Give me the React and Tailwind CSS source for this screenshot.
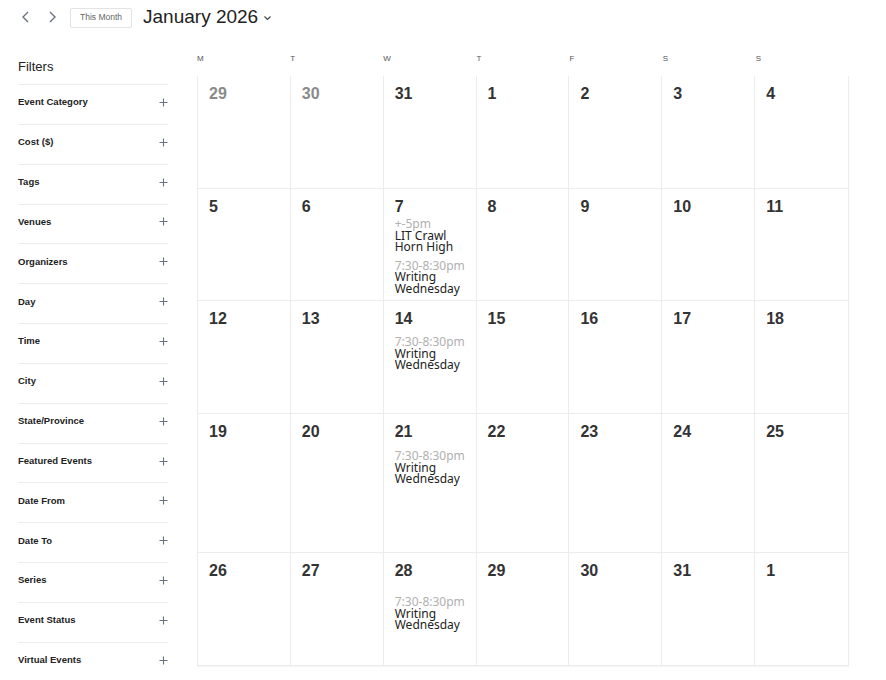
const FILTERS = [
  "Event Category",
  "Cost ($)",
  "Tags",
  "Venues",
  "Organizers",
  "Day",
  "Time",
  "City",
  "State/Province",
  "Featured Events",
  "Date From",
  "Date To",
  "Series",
  "Event Status",
  "Virtual Events",
];

const DAYS = ["M", "T", "W", "T", "F", "S", "S"];

const WRITING = { time: "7:30-8:30pm", title: ["Writing", "Wednesday"] };

// each week: height + offset of the event list
const WEEKS = [
  { h: "h-[113px]", pad: "pt-0", days: [[29, true], [30, true], [31], [1], [2], [3], [4]] },
  {
    h: "h-[112px]",
    pad: "pt-[0px]",
    days: [[5], [6], [7, false, [{ time: "+-5pm", title: ["LIT Crawl", "Horn High"] }, WRITING]], [8], [9], [10], [11]],
  },
  { h: "h-[113px]", pad: "pt-[6px]", days: [[12], [13], [14, false, [WRITING]], [15], [16], [17], [18]] },
  { h: "h-[139px]", pad: "pt-[7px]", days: [[19], [20], [21, false, [WRITING]], [22], [23], [24], [25]] },
  { h: "h-[112px]", pad: "pt-[14px]", days: [[26], [27], [28, false, [WRITING]], [29], [30], [31], [1]] },
];

function Chevron({ dir }) {
  return (
    <svg width="10" height="14" viewBox="0 0 10 14" className="text-gray-500">
      <path
        d={dir === "left" ? "M7 2 L2 7 L7 12" : "M3 2 L8 7 L3 12"}
        fill="none"
        stroke="currentColor"
        strokeWidth="1.4"
      />
    </svg>
  );
}

function Plus() {
  return (
    <svg width="9" height="9" viewBox="0 0 9 9" className="text-gray-500">
      <path d="M4.5 0.5 V8.5 M0.5 4.5 H8.5" stroke="currentColor" strokeWidth="1.1" />
    </svg>
  );
}

function DayCell({ day, dim, events, pad, first, last }) {
  return (
    <div className={`${last ? "" : "border-r"} border-[#ececec] ${first ? "pl-[11px]" : "pl-[11px]"} pt-[9px]`}>
      <div
        className={`text-[16px] font-bold leading-[18px] ${dim ? "text-[#8a8a8a]" : "text-[#333]"}`}
        style={{ fontFamily: '"Liberation Sans", Arial, sans-serif' }}
      >
        {day}
      </div>
      {events && (
        <div className={`${pad} flex flex-col gap-[5px]`} style={{ fontFamily: '"Noto Sans", sans-serif' }}>
          {events.map((ev, i) => (
            <div key={i} className="text-[12px] leading-[11.5px]">
              <div className="text-[#b0b0b0] mt-[2px]">{ev.time}</div>
              {ev.title.map((t) => (
                <div key={t} className="text-[#222]">{t}</div>
              ))}
            </div>
          ))}
        </div>
      )}
    </div>
  );
}

export default function App() {
  return (
    <div
      className="w-[886px] h-[680px] bg-white overflow-hidden relative"
      style={{ fontFamily: '"Liberation Sans", Arial, sans-serif' }}
    >
      {/* Top bar */}
      <div className="flex items-center h-[36px] pl-[21px]">
        <div className="flex items-center gap-[16px] mt-[-2px]">
          <Chevron dir="left" />
          <Chevron dir="right" />
        </div>
        <button className="ml-[13px] h-[20px] px-[9px] border border-[#e3e3e3] rounded-[2px] text-[8.5px] text-[#666] mt-[-1px]">
          This Month
        </button>
        <div className="ml-[11px] flex items-center text-[19px] text-[#222] mt-[-2px]">
          January 2026
          <svg width="9" height="6" viewBox="0 0 9 6" className="ml-[5px] mt-[2px] text-[#444]">
            <path d="M1.5 1.5 L4.5 4.5 L7.5 1.5" fill="none" stroke="currentColor" strokeWidth="1.2" />
          </svg>
        </div>
      </div>

      <div className="flex">
        {/* Filters sidebar */}
        <div className="w-[150px] ml-[18px] pt-[23px]">
          <div className="text-[13px] text-[#222] leading-[16px] mb-[9px]">Filters</div>
          {FILTERS.map((f) => (
            <div
              key={f}
              className="h-[39.85px] border-t border-[#ececec] flex items-center justify-between pb-[4px]"
            >
              <span className="text-[9.5px] font-bold text-[#222]">{f}</span>
              <Plus />
            </div>
          ))}
        </div>

        {/* Calendar */}
        <div className="ml-[29px] w-[652px] pt-[18px]">
          <div className="grid grid-cols-7 h-[22px]">
            {DAYS.map((d, i) => (
              <div key={i} className="text-[8px] text-[#555] leading-[10px]">
                {d}
              </div>
            ))}
          </div>
          <div className="border-l border-b border-r border-[#ececec] shadow-[0_1px_1px_rgba(0,0,0,0.04)]">
            {WEEKS.map((w, wi) => (
              <div
                key={wi}
                className={`grid grid-cols-7 ${w.h} ${wi < WEEKS.length - 1 ? "border-b border-[#ececec]" : ""}`}
              >
                {w.days.map(([day, dim, events], di) => (
                  <DayCell
                    key={di}
                    day={day}
                    dim={dim}
                    events={events}
                    pad={w.pad}
                    first={di === 0}
                    last={di === 6}
                  />
                ))}
              </div>
            ))}
          </div>
        </div>
      </div>
    </div>
  );
}
